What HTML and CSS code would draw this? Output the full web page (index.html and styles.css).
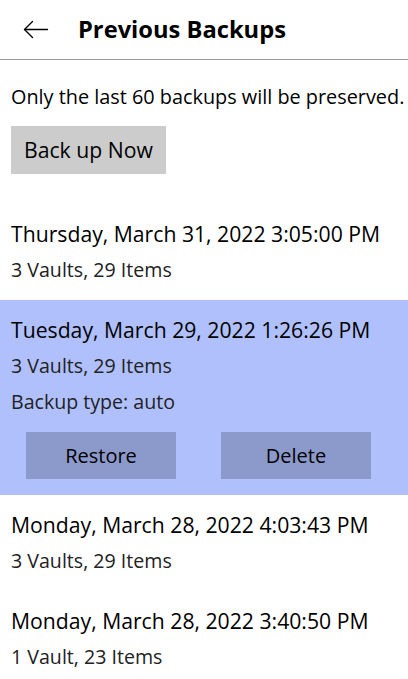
FILE: index.html
```html
<!DOCTYPE html>
<html lang="en">
<head>
    <meta charset="UTF-8">
    <meta name="viewport" content="width=device-width, initial-scale=1.0">
    <title>Previous Backups</title>
    <link rel="stylesheet" href="styles.css">
</head>
<body>
    <header class="top-bar">
        <button class="back-button" aria-label="Back">
            <svg width="26" height="19" viewBox="0 0 26 19" fill="none" stroke="currentColor" stroke-width="1.3" stroke-linecap="round" stroke-linejoin="round">
                <line x1="1.5" y1="9.5" x2="24.5" y2="9.5"></line>
                <polyline points="9.5,1.5 1.5,9.5 9.5,17.5"></polyline>
            </svg>
        </button>
        <h1>Previous Backups</h1>
    </header>

    <main class="content">
        <p class="notice">Only the last 60 backups will be preserved.</p>
        <button class="backup-now">Back up Now</button>

        <ul class="backup-list">
            <li class="backup-item">
                <div class="backup-date">Thursday, March 31, 2022 3:05:00 PM</div>
                <div class="backup-meta">3 Vaults, 29 Items</div>
            </li>
            <li class="backup-item selected">
                <div class="backup-date">Tuesday, March 29, 2022 1:26:26 PM</div>
                <div class="backup-meta">3 Vaults, 29 Items</div>
                <div class="backup-meta">Backup type: auto</div>
                <div class="backup-actions">
                    <button>Restore</button>
                    <button>Delete</button>
                </div>
            </li>
            <li class="backup-item">
                <div class="backup-date">Monday, March 28, 2022 4:03:43 PM</div>
                <div class="backup-meta">3 Vaults, 29 Items</div>
            </li>
            <li class="backup-item">
                <div class="backup-date">Monday, March 28, 2022 3:40:50 PM</div>
                <div class="backup-meta">1 Vault, 23 Items</div>
            </li>
        </ul>
    </main>
</body>
</html>
```

FILE: styles.css
```css
/* General */
* {
    box-sizing: border-box;
    margin: 0;
    padding: 0;
}

body {
    font-family: 'Open Sans', 'Noto Sans', sans-serif;
    font-size: 20px;
    color: #000;
    background-color: #fff;
    overflow: hidden;
}

button {
    font-family: inherit;
    font-size: inherit;
    color: inherit;
    border: none;
    cursor: pointer;
}

/* Header */
.top-bar {
    height: 60px;
    display: flex;
    align-items: center;
    border-bottom: 1px solid #9a9a9a;
}

.back-button {
    background: transparent;
    width: 26px;
    height: 19px;
    margin-left: 23px;
    margin-bottom: 1px;
    display: flex;
}

.top-bar h1 {
    font-size: 23.7px;
    font-weight: 700;
    margin-left: 29px;
    margin-bottom: 2px;
}

/* Content */
.notice {
    padding: 19px 0 0 11px;
    font-size: 19.85px;
    line-height: 36px;
    white-space: nowrap;
}

.backup-now {
    margin: 11px 0 0 11px;
    height: 48px;
    padding: 0 13px;
    font-size: 21.2px;
    line-height: 48px;
    background-color: #cccccc;
}

/* Backup list */
.backup-list {
    list-style: none;
    margin-top: 30px;
}

.backup-item {
    padding: 12px 0 12px 11px;
    line-height: 36px;
}

.backup-item.selected {
    background-color: #b0c0fd;
    padding-bottom: 16px;
}

.backup-date {
    font-size: 21.2px;
    white-space: nowrap;
}

.backup-meta {
    font-size: 19.6px;
    color: #222;
}

.backup-actions {
    display: flex;
    gap: 45px;
    margin-top: 12px;
    padding-left: 15px;
}

.backup-actions button {
    width: 150px;
    height: 47px;
    line-height: 47px;
    background-color: #8c99cb;
}
```
